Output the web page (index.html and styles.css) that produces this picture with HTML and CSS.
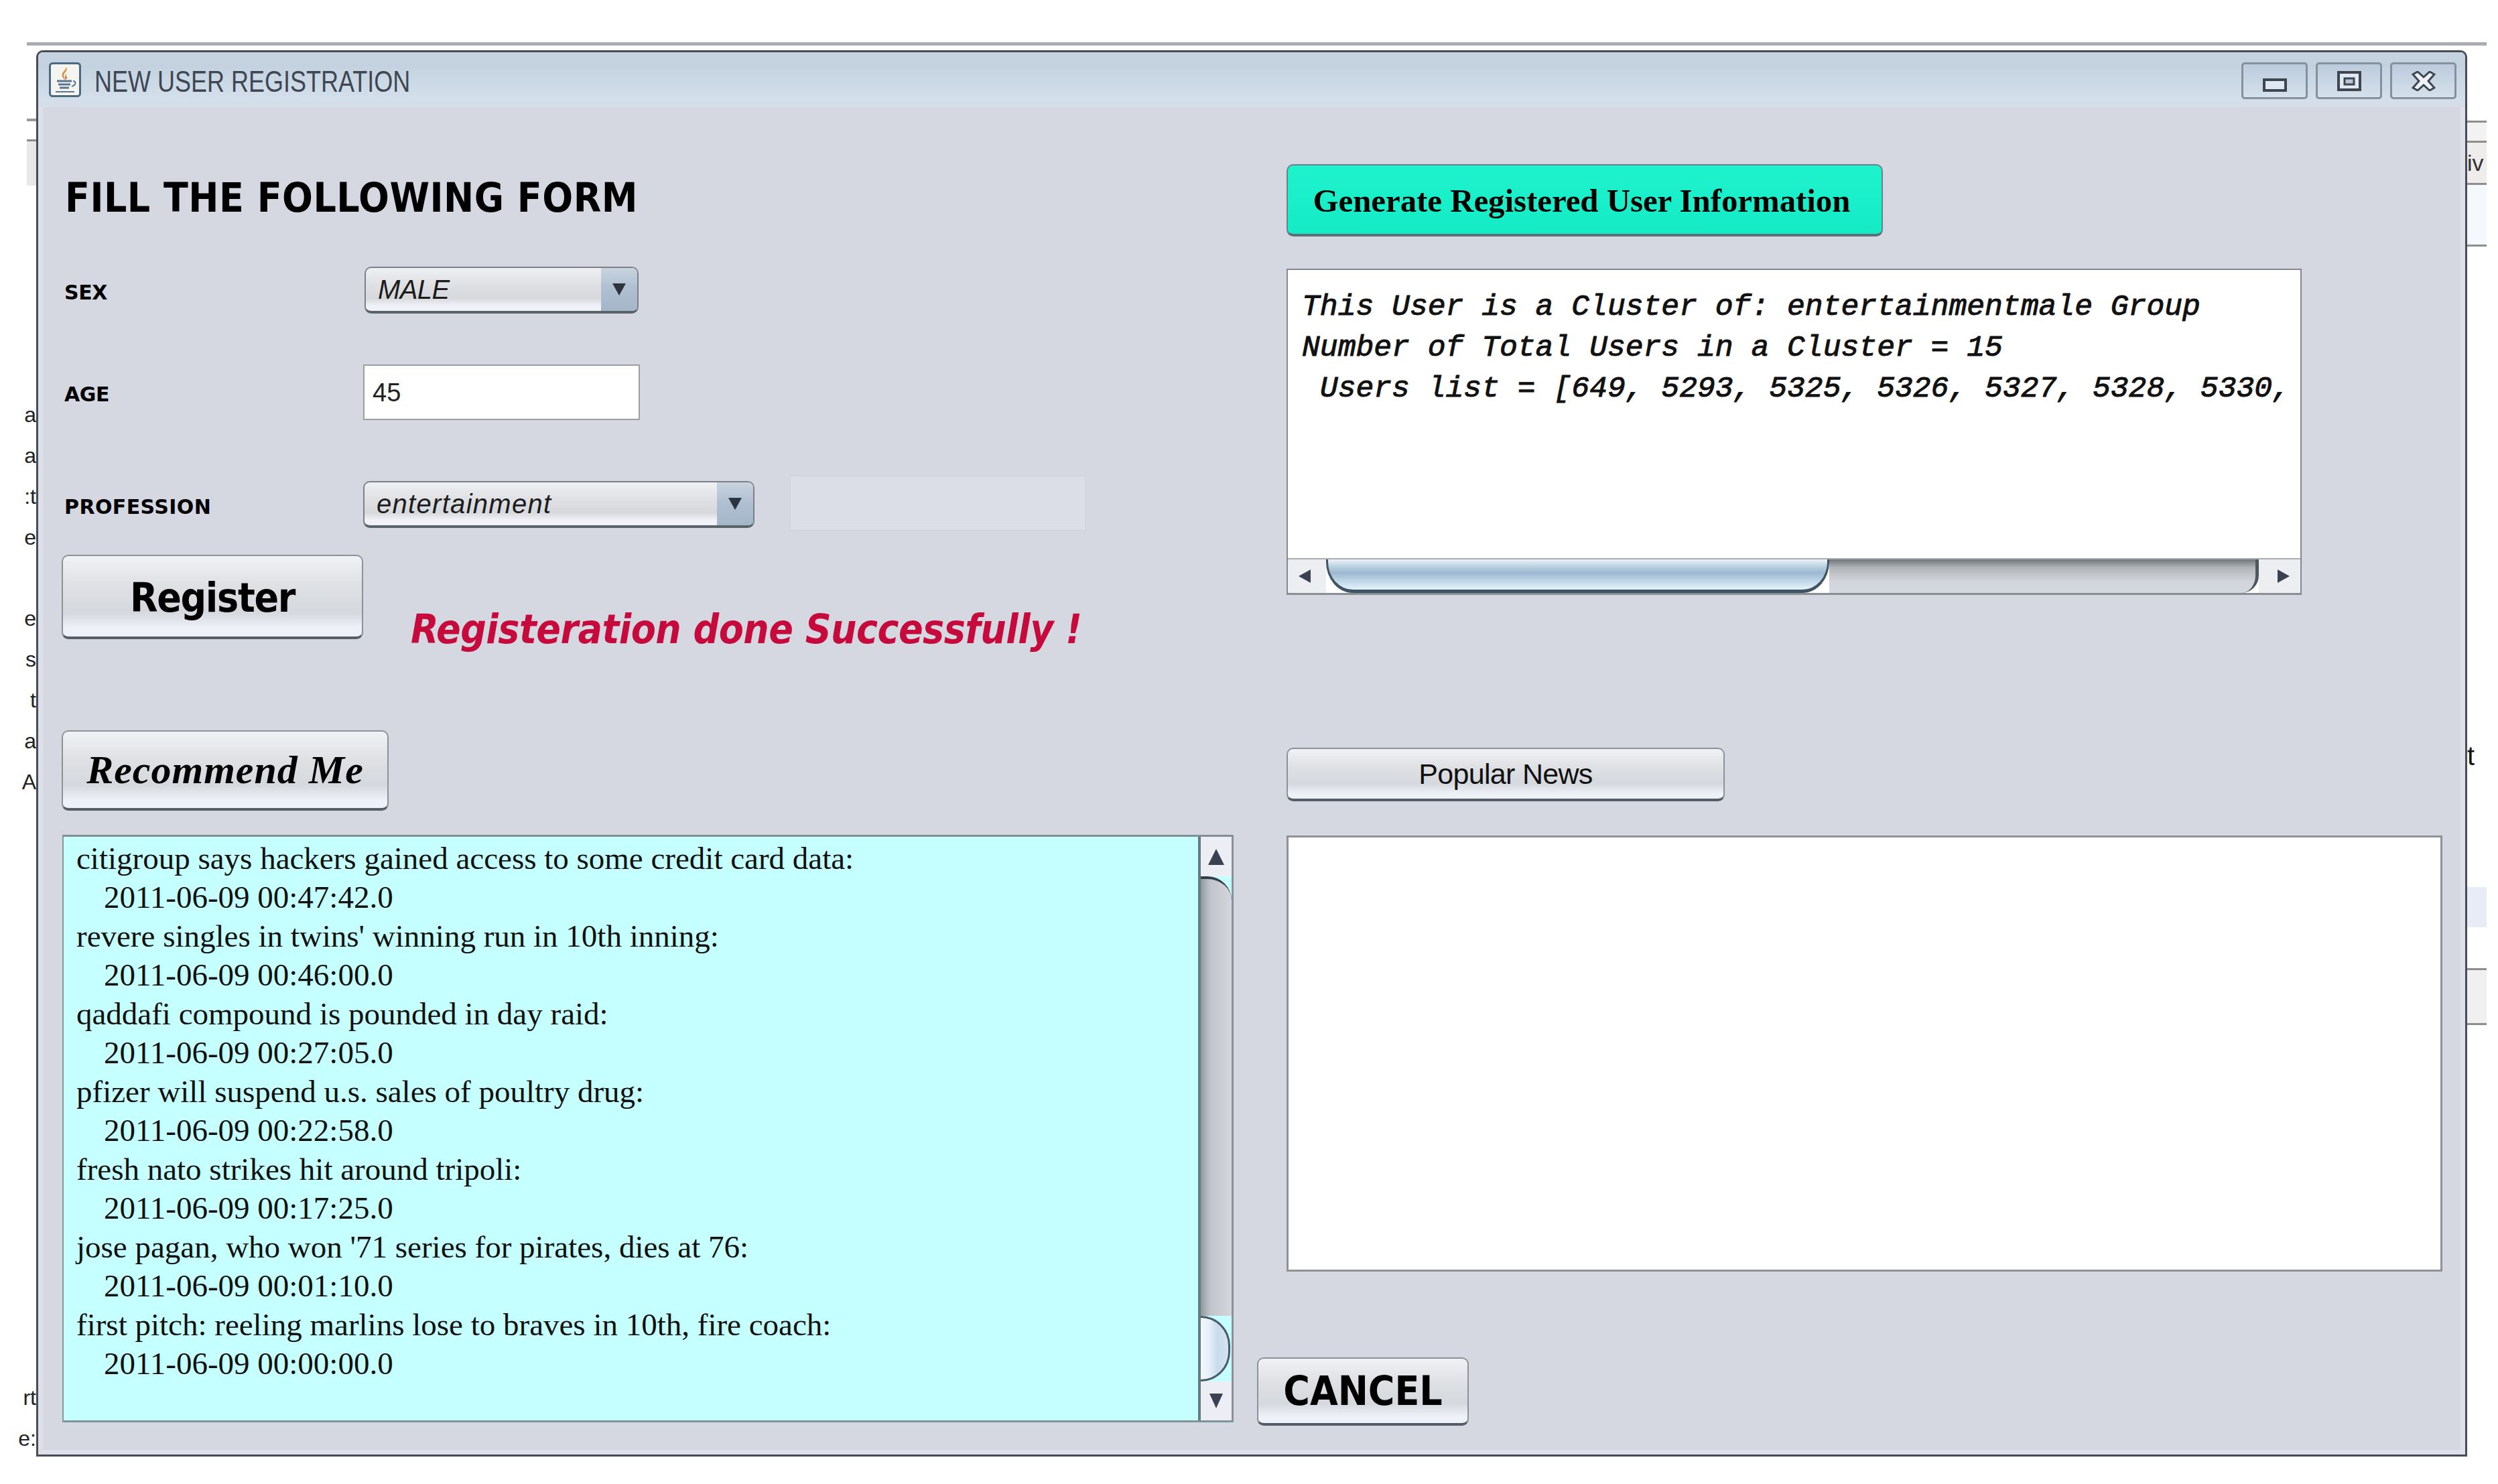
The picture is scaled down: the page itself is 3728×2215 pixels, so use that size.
FILE: index.html
```html
<!DOCTYPE html>
<html>
<head>
  <meta charset="utf-8">
  <title>NEW USER REGISTRATION</title>
  <link rel="stylesheet" href="styles.css">
</head>
<body class="body">
<div class="screen">
  <div class="topline"></div>
  <div class="desk">

    <div class="leftstrip">
      <div class="leftline"></div>
      <div class="leftband"></div>
      <div class="leftletters">
        <span>a</span><span>a</span><span>:t</span><span>e</span><span class="gap1">e</span><span>s</span><span>t</span><span>a</span><span>A</span>
        <span class="gap2">rt</span><span>e:</span>
      </div>
    </div>

    <div class="window">
      <div class="titlebar">
        <svg class="javaicon" viewBox="0 0 48 52">
          <rect x="1.5" y="1.5" width="45" height="49" rx="4" fill="#f4f4f0" stroke="#4d6a80" stroke-width="3"/>
          <path d="M26 7c4 6-7 9-3 16 1 2 2 3 3 4-6-3-8-8-5-12 2-3 5-5 5-8z" fill="#e2892a"/>
          <path d="M29 14c-4 3-4 6-2 9l-2 3c-2-5 0-9 4-12z" fill="#c9602a"/>
          <path d="M12 28h22M14 33h18M16 38h14" stroke="#5b7690" stroke-width="3" fill="none"/>
          <path d="M36 28c5 0 5 6-2 8" stroke="#5b7690" stroke-width="2" fill="none"/>
          <path d="M10 44h28" stroke="#5b7690" stroke-width="2"/>
        </svg>
        <span class="titletext">NEW USER REGISTRATION</span>
        <div class="winbuttons">
          <div class="winbtn">
            <svg class="minicon" viewBox="0 0 36 20"><rect x="2" y="2" width="32" height="16" fill="#e2e8f2" stroke="#3e4652" stroke-width="4"/></svg>
          </div>
          <div class="winbtn">
            <svg class="maxicon" viewBox="0 0 36 30"><rect x="2" y="2" width="32" height="26" fill="#e2e8f2" stroke="#3e4652" stroke-width="4"/><rect x="11" y="11" width="14" height="9" fill="#b9c8d8" stroke="#3e4652" stroke-width="3"/></svg>
          </div>
          <div class="winbtn">
            <svg class="maxicon" viewBox="0 0 36 30"><path d="M2 5L9 1l9 8 9-8 7 4-9 10 9 10-7 4-9-8-9 8-7-4 9-10z" fill="#eef1f6" stroke="#3e4652" stroke-width="3"/></svg>
          </div>
        </div>
      </div>

      <div class="content">
        <div class="leftcol">
          <div class="formhead">FILL THE FOLLOWING FORM</div>

          <div class="formrow sexrow">
            <div class="formlabel">SEX</div>
            <div class="combo combosex">
              <span class="combotext">MALE</span>
              <span class="comboarrow"><i class="tridown"></i></span>
            </div>
          </div>

          <div class="formrow agerow">
            <div class="formlabel">AGE</div>
            <div class="agefield">45</div>
          </div>

          <div class="formrow profrow">
            <div class="formlabel proflabel">PROFESSION</div>
            <div class="combo comboprof">
              <span class="combotext">entertainment</span>
              <span class="comboarrow"><i class="tridown"></i></span>
            </div>
            <div class="disabledfield"></div>
          </div>

          <div class="regrow">
            <div class="btn btnregister">Register</div>
            <div class="regmessage">Registeration done Successfully !</div>
          </div>

          <div class="btn btnrecommend">Recommend Me</div>

          <div class="newsbox">
            <div class="newslist">
              <div>citigroup says hackers gained access to some credit card data:</div>
              <div class="newsdate">2011-06-09 00:47:42.0</div>
              <div>revere singles in twins' winning run in 10th inning:</div>
              <div class="newsdate">2011-06-09 00:46:00.0</div>
              <div>qaddafi compound is pounded in day raid:</div>
              <div class="newsdate">2011-06-09 00:27:05.0</div>
              <div>pfizer will suspend u.s. sales of poultry drug:</div>
              <div class="newsdate">2011-06-09 00:22:58.0</div>
              <div>fresh nato strikes hit around tripoli:</div>
              <div class="newsdate">2011-06-09 00:17:25.0</div>
              <div>jose pagan, who won '71 series for pirates, dies at 76:</div>
              <div class="newsdate">2011-06-09 00:01:10.0</div>
              <div>first pitch: reeling marlins lose to braves in 10th, fire coach:</div>
              <div class="newsdate">2011-06-09 00:00:00.0</div>
            </div>
            <div class="vscroll">
              <div class="vbtn vbtntop"><i class="triup"></i></div>
              <div class="vtrack"></div>
              <div class="vthumb"></div>
              <div class="vbtn"><i class="tridownsmall"></i></div>
            </div>
          </div>
        </div>

        <div class="rightcol">
          <div class="btn btngenerate">Generate Registered User Information</div>

          <div class="infobox">
            <div class="infotext">
              <div>This User is a Cluster of: entertainmentmale Group</div>
              <div>Number of Total Users in a Cluster = 15</div>
              <div>&nbsp;Users list = [649, 5293, 5325, 5326, 5327, 5328, 5330,</div>
            </div>
            <div class="hscroll">
              <div class="hbtn"><i class="trileft"></i></div>
              <div class="hthumb"></div>
              <div class="htrack"></div>
              <div class="hbtn hbtnright"><i class="triright"></i></div>
            </div>
          </div>

          <div class="btn btnpopular">Popular News</div>
          <div class="popularbox"></div>
          <div class="btn btncancel">CANCEL</div>
        </div>
      </div>
    </div>

    <div class="rightstrip">
      <div class="rs-line rs-first"></div>
      <div class="rs-fill1"></div>
      <div class="rs-line"></div>
      <div class="rs-tab">iv</div>
      <div class="rs-line"></div>
      <div class="rs-fill2"></div>
      <div class="rs-line"></div>
      <div class="rs-letter">t</div>
      <div class="rs-blue"></div>
      <div class="rs-line rs-third"></div>
      <div class="rs-fill3"></div>
      <div class="rs-line"></div>
    </div>

  </div>
</div>
</body>
</html>
```

FILE: styles.css
```css
.body { margin:0; background:#FFFFFF; font-family:"Liberation Sans",Arial,sans-serif; color:#000000; }
.screen { width:3671px; height:2215px; padding:63px 0 0 40px; overflow:hidden; }
.topline { height:5px; background:#a9acb0; margin-bottom:7px; }
.desk { display:flex; align-items:flex-start; }

/* bits of the page behind the window */
.leftstrip { width:14px; flex:none; height:2098px; }
.leftline { height:4px; margin-top:102px; background:#999; }
.leftband { height:69px; margin-top:27px; background:#e8e8e8; border-top:3px solid #8a8a8a; box-sizing:border-box; }
.leftletters { display:flex; flex-direction:column; align-items:flex-end; margin-top:312px; font-size:32px; line-height:61px; color:#222; }
.leftletters span { height:61px; }
.leftletters .gap1 { margin-top:60px; }
.leftletters .gap2 { margin-top:858px; }
.rightstrip { width:29px; flex:none; height:2098px; }
.rs-line { height:3px; background:#8e8e8e; }
.rs-first { margin-top:105px; }
.rs-fill1 { height:27px; background:#f2f2f2; }
.rs-tab { height:60px; background:#efecec; font-size:34px; line-height:60px; color:#333; }
.rs-fill2 { height:89px; background:#f5f8fc; }
.rs-letter { margin-top:740px; height:40px; font-size:40px; line-height:40px; color:#111; }
.rs-blue { margin-top:176px; height:60px; background:#e7ecf6; }
.rs-third { margin-top:61px; }
.rs-fill3 { height:79px; background:#f0f0f0; }

/* window frame */
.window { width:3628px; height:2099px; flex:none; box-sizing:border-box; border:3px solid #474c56; border-radius:10px 10px 0 0; background:#d5d8e1; box-shadow:inset 0 0 0 7px #dde0e9; overflow:hidden; }
.titlebar { height:82px; display:flex; align-items:flex-start; background:linear-gradient(#c6d2df 0%,#c4d2e0 25%,#d2dfea 80%,#d6dde7 100%); padding-left:16px; box-sizing:border-box; }
.javaicon { width:48px; height:52px; margin-top:15px; flex:none; }
.titletext { margin-left:20px; margin-top:19px; font-size:45px; line-height:50px; color:#3f4753; white-space:nowrap; transform:scaleX(.8); transform-origin:left center; }
.winbuttons { margin-left:auto; margin-right:13px; margin-top:15px; display:flex; gap:12px; }
.winbtn { width:99px; height:55px; box-sizing:border-box; border:3px solid #87919d; border-radius:5px; background:linear-gradient(#bccbdc,#d5e1ec); display:flex; justify-content:center; align-items:flex-start; }
.minicon { width:36px; height:20px; margin-top:21px; }
.maxicon { width:36px; height:30px; margin-top:10px; }

.content { display:flex; padding-left:35px; }
.leftcol { width:1786px; flex:none; }
.rightcol { padding-left:42px; flex:none; }

/* left column */
.formhead { margin-top:100px; padding-left:5px; height:70px; font-family:"DejaVu Sans Condensed","DejaVu Sans",sans-serif; font-stretch:condensed; font-weight:bold; font-size:60px; line-height:70px; letter-spacing:.5px; white-space:nowrap; }
.formrow { display:flex; align-items:center; }
.sexrow { margin-top:68px; }
.agerow { margin-top:76px; }
.profrow { margin-top:82px; }
.formlabel { width:446px; padding-left:4px; flex:none; font-family:"DejaVu Sans",sans-serif; font-weight:bold; font-size:30px; letter-spacing:-.4px; padding-top:6px; }
.proflabel { letter-spacing:.4px; padding-top:10px; }
.combo { display:flex; box-sizing:border-box; height:70px; border:2px solid #7c8087; border-bottom:4px solid #5a626c; border-radius:10px; background:linear-gradient(#eef0f3 0%,#e2e4e7 30%,#d6d8db 70%,#f0f2f7 88%); overflow:hidden; }
.combosex { width:409px; margin-left:2px; }
.comboprof { width:584px; height:70px; margin-top:4px; }
.combotext { flex:1; padding-left:18px; font-style:italic; font-size:40px; line-height:64px; letter-spacing:-.6px; color:#1c1c1c; }
.comboprof .combotext { letter-spacing:1.3px; }
.comboarrow { width:54px; flex:none; display:flex; align-items:center; justify-content:center; background:linear-gradient(#c9d3de 0%,#aebfd1 50%,#a4b6c9 100%); }
.tridown { width:0; height:0; border-left:10px solid transparent; border-right:10px solid transparent; border-top:18px solid #2c3440; }
.agefield { width:413px; height:83px; box-sizing:border-box; padding-left:12px; background:#ffffff; border:2px solid #9a9ea6; font-size:38px; line-height:80px; color:#222; }
.disabledfield { width:443px; height:84px; margin-left:52px; box-sizing:border-box; background:#dbdee6; border:2px solid #d2d5dc; }

.regrow { display:flex; margin-top:35px; align-items:flex-start; }
.btn { display:flex; align-items:center; justify-content:center; box-sizing:border-box; border:2px solid #8d9198; border-bottom:4px solid #565d66; border-radius:10px; background:linear-gradient(#f0f2f5 0%,#dfe1e4 35%,#d5d8dd 70%,#eef1f7 90%); white-space:nowrap; }
.btnregister { width:450px; height:126px; font-family:"DejaVu Sans Condensed","DejaVu Sans",sans-serif; font-stretch:condensed; font-weight:bold; font-size:60px; letter-spacing:-1.3px; padding-top:3px; }
.regmessage { margin-left:71px; margin-top:76px; font-family:"DejaVu Sans Condensed","DejaVu Sans",sans-serif; font-stretch:condensed; font-weight:bold; font-style:italic; font-size:60px; line-height:70px; letter-spacing:-.5px; color:#c70a3c; white-space:nowrap; }
.btnrecommend { width:488px; height:120px; margin-top:116px; font-family:"Liberation Serif",serif; font-weight:bold; font-style:italic; font-size:60px; letter-spacing:1px; }

.newsbox { display:flex; width:1748px; height:877px; margin-top:36px; margin-left:1px; box-sizing:border-box; border-top:3px solid #7f8f92; border-bottom:3px solid #7f9496; border-left:2px solid #88999b; border-right:3px solid #8c9097; background:#c5ffff; }
.newslist { flex:1; padding:3px 0 0 19px; font-family:"Liberation Serif",serif; font-size:47px; line-height:58px; color:#111; white-space:nowrap; overflow:hidden; }
.newsdate { padding-left:41px; }
.vscroll { width:46px; flex:none; display:flex; flex-direction:column; border-left:4px solid #66797e; }
.vbtn { height:58px; background:#eceef3; display:flex; align-items:center; justify-content:center; }
.vbtntop { height:59px; }
.vtrack { flex:1; background:linear-gradient(90deg,#8d9a9f 0%,#c1c4ca 30%,#d6d6de 100%); border-top:4px solid #333d42; border-top-right-radius:36px; }
.vthumb { height:92px; margin-right:2px; border:3px solid #4b5a68; border-left:none; border-radius:0 50px 50px 0; background:linear-gradient(90deg,#f2f7fc 0%,#e8f0f8 30%,#c9dcee 60%,#d4e3f1 100%); }
.triup { width:0; height:0; border-left:12px solid transparent; border-right:12px solid transparent; border-bottom:24px solid #3a4150; }
.tridownsmall { width:0; height:0; border-left:10px solid transparent; border-right:10px solid transparent; border-top:22px solid #3a4150; }

/* right column */
.btngenerate { width:890px; height:108px; margin-top:85px; padding-right:9px; padding-top:3px; background:linear-gradient(#1ef2cd,#14ecc6); border-color:#70808a; border-bottom-color:#5d7078; font-family:"Liberation Serif",serif; font-weight:bold; font-size:48.8px; }
.infobox { width:1515px; height:487px; margin-top:48px; box-sizing:border-box; border:2px solid #85898f; border-bottom:3px solid #8a8e95; background:#ffffff; display:flex; flex-direction:column; }
.infotext { flex:1; padding:25px 0 0 21px; font-family:"Liberation Mono",monospace; font-style:italic; font-size:44.7px; line-height:61px; color:#111; -webkit-text-stroke:1px #111; white-space:nowrap; overflow:hidden; }
.hscroll { height:50px; flex:none; display:flex; border-top:2px solid #a9adb2; }
.hbtn { width:57px; flex:none; background:#eceef2; display:flex; align-items:center; padding-left:16px; box-sizing:border-box; }
.hbtnright { width:62px; padding-left:28px; }
.hthumb { width:751px; flex:none; box-sizing:border-box; border:3px solid #3f5566; border-top:none; border-bottom-width:5px; border-radius:0 0 40px 40px / 0 0 46px 46px; background:linear-gradient(#eaf3fa 0%,#b8cfe0 25%,#9db8cf 45%,#bdd4e6 70%,#e6f3fc 100%); }
.htrack { flex:1; background:linear-gradient(#70767a 0%,#b3b6b8 25%,#d2d4da 65%,#d6d8e0 100%); border-right:5px solid #4f575e; border-bottom-right-radius:26px; }
.trileft { width:0; height:0; border-top:10px solid transparent; border-bottom:10px solid transparent; border-right:18px solid #3a4150; }
.triright { width:0; height:0; border-top:10px solid transparent; border-bottom:10px solid transparent; border-left:18px solid #3a4150; }
.btnpopular { width:654px; height:80px; margin-top:228px; font-size:43px; letter-spacing:-.7px; color:#111; }
.popularbox { width:1725px; height:651px; margin-top:51px; box-sizing:border-box; background:#ffffff; border:3px solid #8f9399; }
.btncancel { width:316px; height:102px; margin-top:128px; margin-left:-44px; font-family:"DejaVu Sans Condensed","DejaVu Sans",sans-serif; font-stretch:condensed; font-weight:bold; font-size:60px; letter-spacing:0; }
```
